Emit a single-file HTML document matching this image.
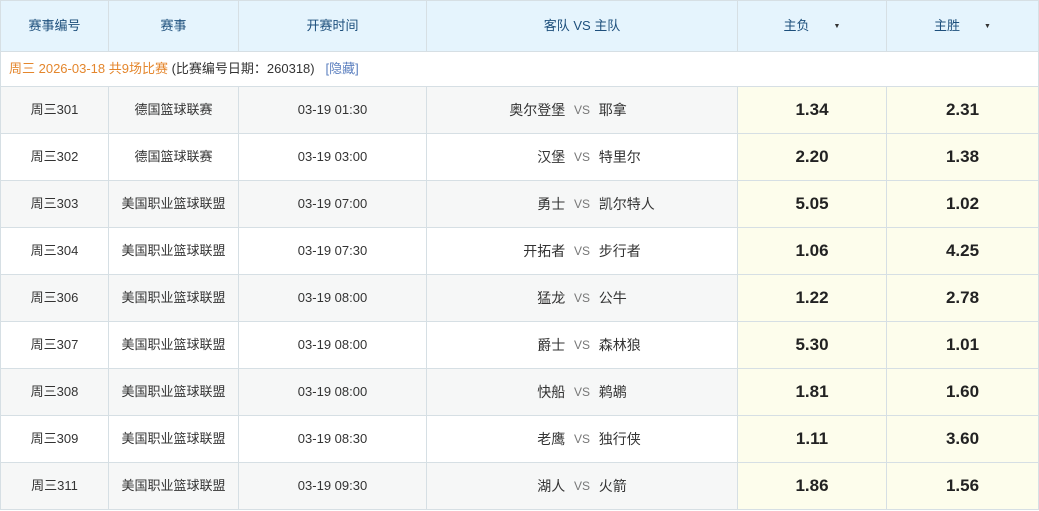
<!DOCTYPE html>
<html><head><meta charset="utf-8"><style>
body{margin:0;width:1039px;height:511px;overflow:hidden;background:#fff;font-family:"Liberation Sans","Noto Sans CJK SC",sans-serif;}
table{border-collapse:collapse;table-layout:fixed;width:1038px;position:absolute;left:0;top:0}
td,th{border:1px solid #d6dfe4;text-align:center;font-size:13px;line-height:16px;color:#333;padding:0;font-weight:normal;vertical-align:middle}
th{background:#e5f4fd;color:#1d4f7c;height:50px}
tr.r td{height:46px;background:#f6f7f7}
tr.r.w td{background:#fff}
tr.r td.o{background:#fdfdec;font-weight:bold;font-size:17px;color:#222}
.info td{height:34px;text-align:left;padding-left:8px;background:#fff;color:#333}
.or{color:#e4862c}.lk{color:#5b7fbf}
.t{display:flex;justify-content:center;align-items:center;font-size:14px;line-height:16px}
.t .a{width:140px;text-align:right}.t .h{width:140px;text-align:left}
.t .v{width:34px;color:#777;font-size:12px}
.ar{font-size:7px;margin-left:24px;color:#333;vertical-align:2px}
</style></head><body>
<table>
<colgroup><col style="width:108px"><col style="width:130px"><col style="width:188px"><col style="width:311px"><col style="width:149px"><col style="width:152px"></colgroup>
<tr><th>赛事编号</th><th>赛事</th><th>开赛时间</th><th>客队 VS 主队</th><th>主负<span class="ar">▼</span></th><th>主胜<span class="ar">▼</span></th></tr>
<tr class="info"><td colspan="6"><span class="or">周三 2026-03-18 共9场比赛</span> (比赛编号日期：260318) &nbsp; <span class="lk">[隐藏]</span></td></tr>
<tr class="r"><td>周三301</td><td>德国篮球联赛</td><td>03-19 01:30</td><td><div class="t"><span class="a">奥尔登堡</span><span class="v">VS</span><span class="h">耶拿</span></div></td><td class="o">1.34</td><td class="o">2.31</td></tr>
<tr class="r w"><td>周三302</td><td>德国篮球联赛</td><td>03-19 03:00</td><td><div class="t"><span class="a">汉堡</span><span class="v">VS</span><span class="h">特里尔</span></div></td><td class="o">2.20</td><td class="o">1.38</td></tr>
<tr class="r"><td>周三303</td><td>美国职业篮球联盟</td><td>03-19 07:00</td><td><div class="t"><span class="a">勇士</span><span class="v">VS</span><span class="h">凯尔特人</span></div></td><td class="o">5.05</td><td class="o">1.02</td></tr>
<tr class="r w"><td>周三304</td><td>美国职业篮球联盟</td><td>03-19 07:30</td><td><div class="t"><span class="a">开拓者</span><span class="v">VS</span><span class="h">步行者</span></div></td><td class="o">1.06</td><td class="o">4.25</td></tr>
<tr class="r"><td>周三306</td><td>美国职业篮球联盟</td><td>03-19 08:00</td><td><div class="t"><span class="a">猛龙</span><span class="v">VS</span><span class="h">公牛</span></div></td><td class="o">1.22</td><td class="o">2.78</td></tr>
<tr class="r w"><td>周三307</td><td>美国职业篮球联盟</td><td>03-19 08:00</td><td><div class="t"><span class="a">爵士</span><span class="v">VS</span><span class="h">森林狼</span></div></td><td class="o">5.30</td><td class="o">1.01</td></tr>
<tr class="r"><td>周三308</td><td>美国职业篮球联盟</td><td>03-19 08:00</td><td><div class="t"><span class="a">快船</span><span class="v">VS</span><span class="h">鹈鹕</span></div></td><td class="o">1.81</td><td class="o">1.60</td></tr>
<tr class="r w"><td>周三309</td><td>美国职业篮球联盟</td><td>03-19 08:30</td><td><div class="t"><span class="a">老鹰</span><span class="v">VS</span><span class="h">独行侠</span></div></td><td class="o">1.11</td><td class="o">3.60</td></tr>
<tr class="r"><td>周三311</td><td>美国职业篮球联盟</td><td>03-19 09:30</td><td><div class="t"><span class="a">湖人</span><span class="v">VS</span><span class="h">火箭</span></div></td><td class="o">1.86</td><td class="o">1.56</td></tr>
</table>
</body></html>
